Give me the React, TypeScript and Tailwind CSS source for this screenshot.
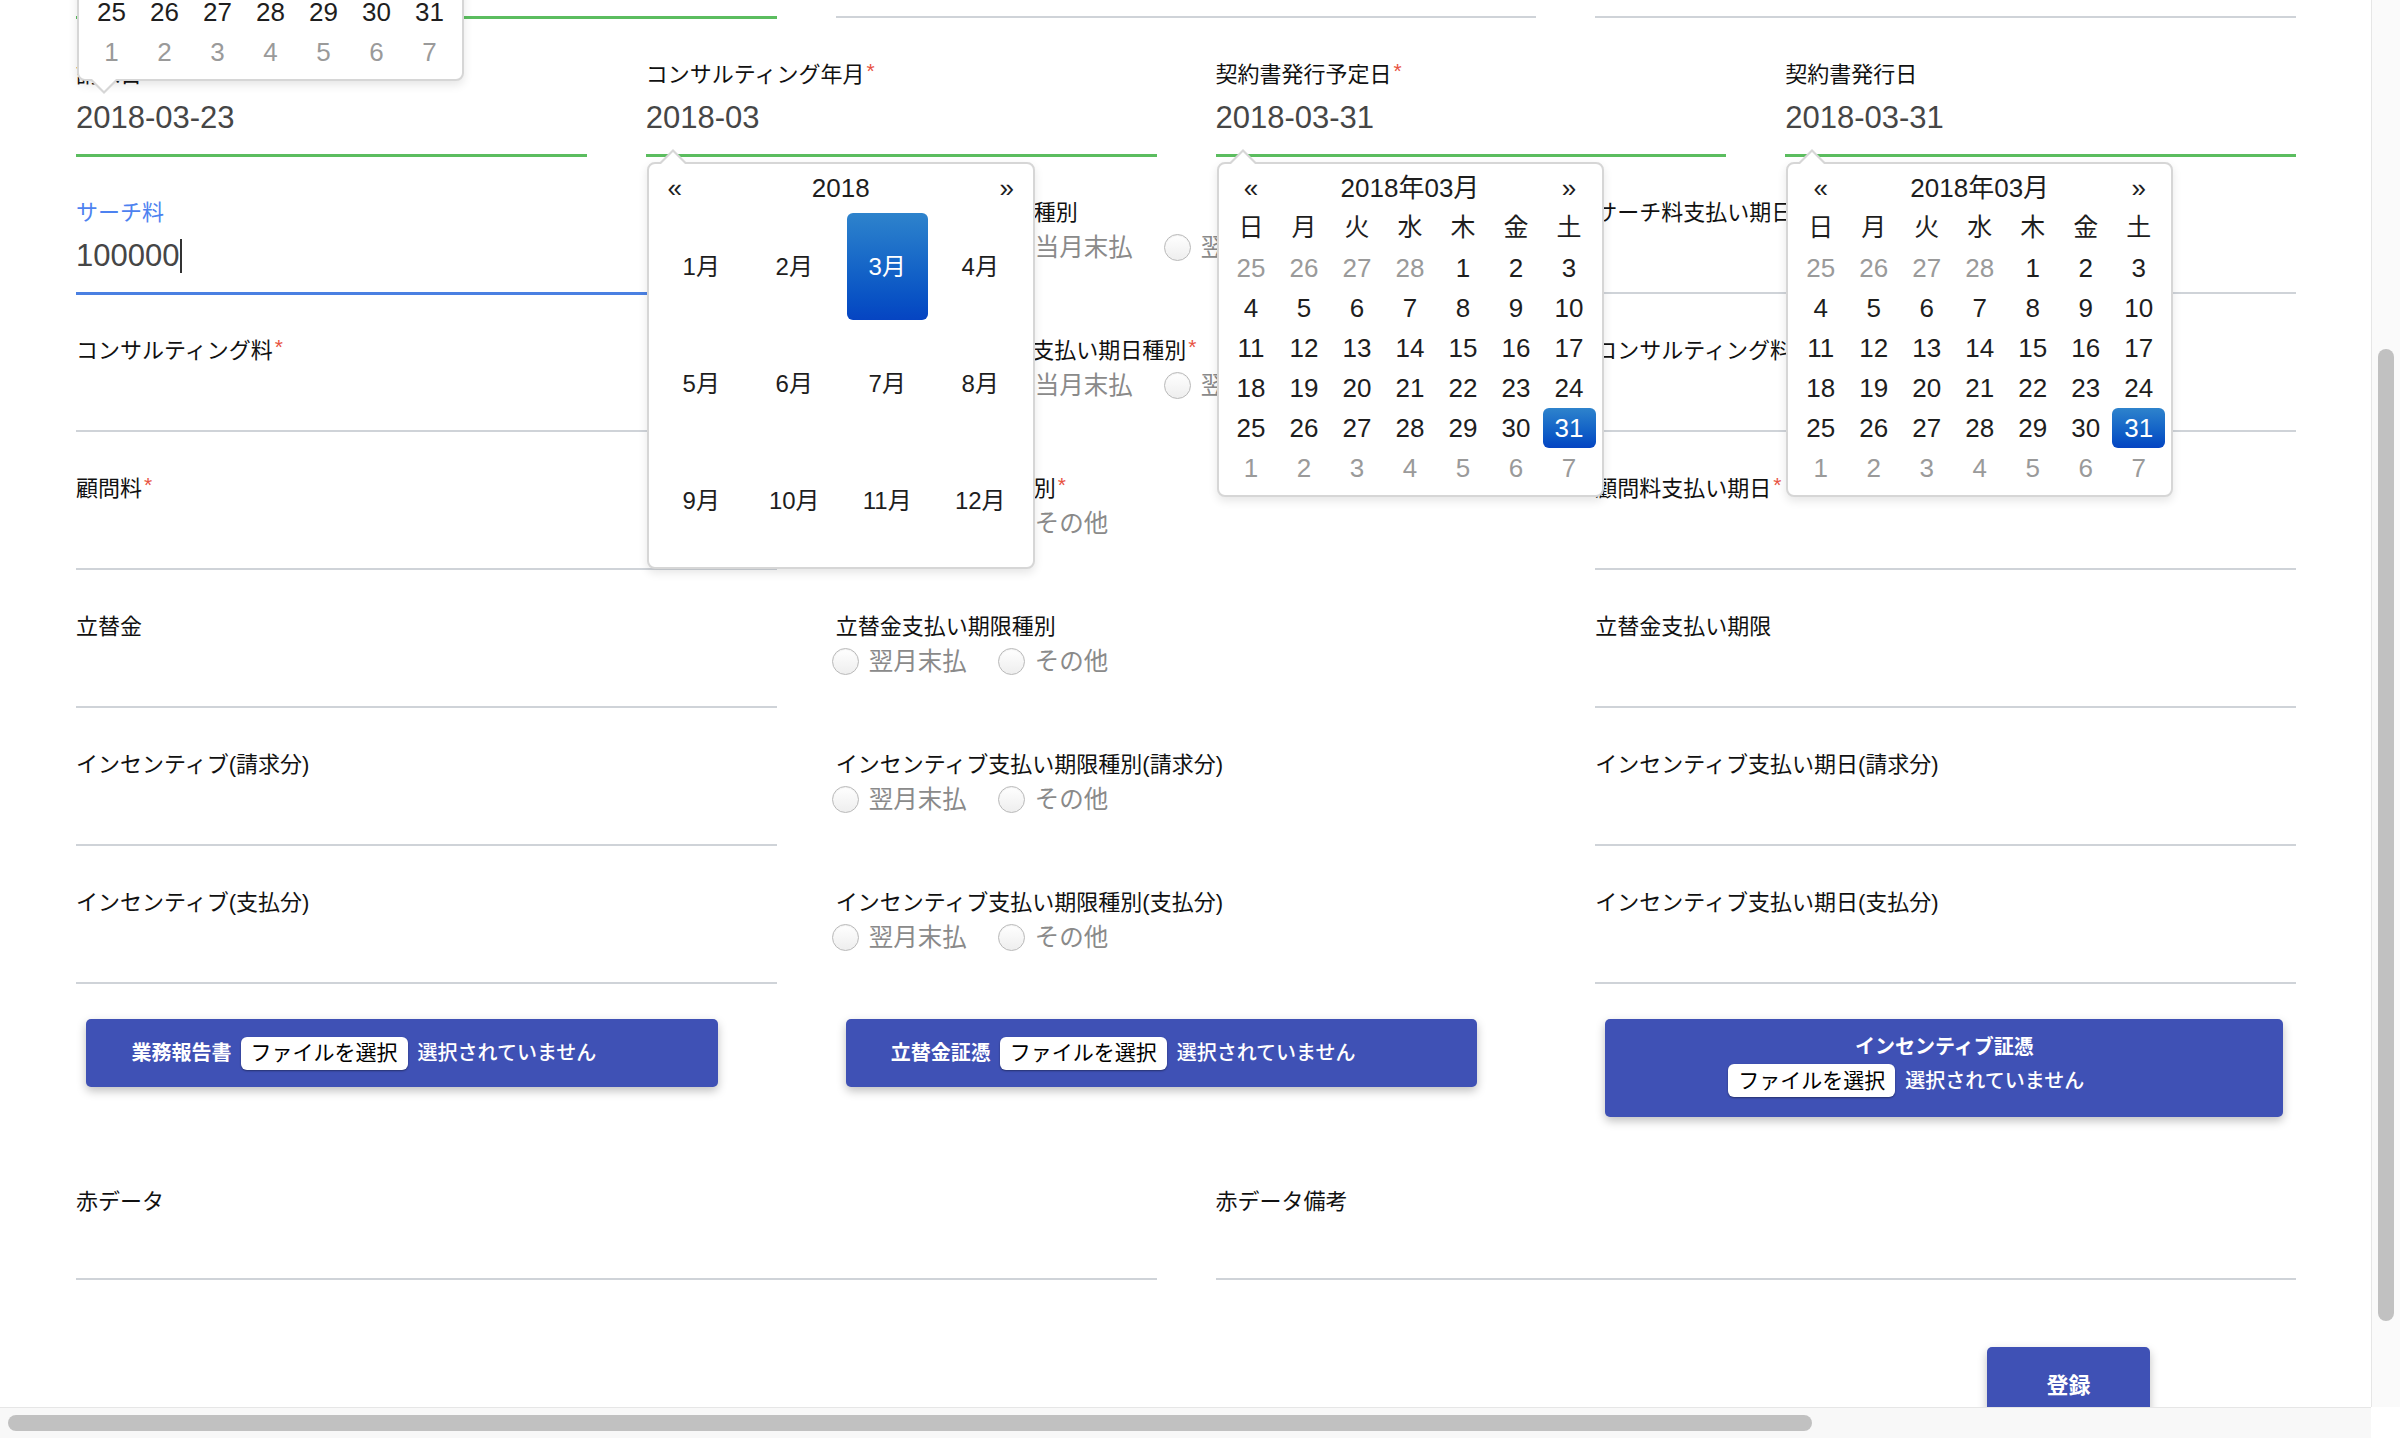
import React from "react";

type LineKind = "green" | "blue" | "gray";

function Line({ kind }: { kind: LineKind }) {
  if (kind === "green") return <div className="mt-[12px] h-[3px] bg-[#5bbd5f]" />;
  if (kind === "blue") return <div className="mt-[12px] h-[3px] bg-[#4a80e2]" />;
  return <div className="mt-[12px] h-[2px] bg-[#cfd3d8]" />;
}

function Req() {
  return <span className="relative top-[-4px] ml-[2px] text-[21px] leading-[0] text-[#e8533f]">*</span>;
}

function Label({ text, required, color }: { text: string; required?: boolean; color?: string }) {
  return (
    <div className={`h-[30px] whitespace-nowrap text-[22px] leading-[30px] ${color ?? "text-[#111111]"}`}>
      {text}
      {required && <Req />}
    </div>
  );
}

function Field({
  label,
  required,
  value,
  kind = "gray",
  labelColor,
  caret,
  valueH = "h-[48px]",
  children,
}: {
  label: string;
  required?: boolean;
  value?: string;
  kind?: LineKind;
  labelColor?: string;
  caret?: boolean;
  valueH?: string;
  children?: React.ReactNode;
}) {
  return (
    <div className="relative">
      <Label text={label} required={required} color={labelColor} />
      <div className={`mt-[4px] flex items-center text-[31px] text-[#464646] ${valueH}`}>
        {value}
        {caret && <span className="ml-[1px] inline-block h-[34px] w-[2px] bg-[#333333]" />}
      </div>
      <Line kind={kind} />
      {children}
    </div>
  );
}

function RadioField({ label, required, options }: { label: string; required?: boolean; options: string[] }) {
  return (
    <div>
      <Label text={label} required={required} />
      <div className="ml-[-4px] mt-[6px] flex h-[27px] items-center whitespace-nowrap">
        {options.map((o, i) => (
          <div key={o} className={`flex items-center ${i > 0 ? "ml-[31px]" : ""}`}>
            <span className="h-[27px] w-[27px] rounded-full border-[1.5px] border-[#b9b9b9] bg-linear-to-b from-white to-[#eeeeee] shadow-[inset_0_1px_1px_rgba(0,0,0,0.06)]" />
            <span className="ml-[10px] text-[24.5px] leading-[27px] text-[#8a8a8a]">{o}</span>
          </div>
        ))}
      </div>
    </div>
  );
}

function ArrowUp() {
  return (
    <>
      <span className="absolute left-[11px] top-[-15px] h-0 w-0 border-x-[13px] border-b-[13px] border-x-transparent border-b-[#d6d6d6]" />
      <span className="absolute left-[12px] top-[-12px] h-0 w-0 border-x-[12px] border-b-[12px] border-x-transparent border-b-white" />
    </>
  );
}

function ArrowDown() {
  return (
    <>
      <span className="absolute bottom-[-15px] left-[12px] h-0 w-0 border-x-[13px] border-t-[13px] border-x-transparent border-t-[#d6d6d6]" />
      <span className="absolute bottom-[-12px] left-[13px] h-0 w-0 border-x-[12px] border-t-[12px] border-x-transparent border-t-white" />
    </>
  );
}

const DAYS: { d: number; m: boolean }[] = [
  ...[25, 26, 27, 28].map((d) => ({ d, m: true })),
  ...Array.from({ length: 31 }, (_, i) => ({ d: i + 1, m: false })),
  ...[1, 2, 3, 4, 5, 6, 7].map((d) => ({ d, m: true })),
];

function DayPicker({ selected, pos, arrow }: { selected: number; pos: string; arrow: "up" | "down" }) {
  return (
    <div
      className={`absolute z-20 w-[387px] rounded-[8px] border-2 border-[#d6d6d6] bg-white px-[6px] pb-[7px] pt-[4px] text-[#1e1e1e] shadow-[0_4px_10px_rgba(0,0,0,0.10)] ${pos}`}
    >
      {arrow === "up" ? <ArrowUp /> : <ArrowDown />}
      <div className="flex h-[40px] items-center text-[26px]">
        <div className="w-[53px] text-center">«</div>
        <div className="flex-1 text-center">2018年03月</div>
        <div className="w-[53px] text-center">»</div>
      </div>
      <div className="grid h-[40px] grid-cols-7 items-center text-center text-[25px]">
        {["日", "月", "火", "水", "木", "金", "土"].map((w) => (
          <div key={w}>{w}</div>
        ))}
      </div>
      <div className="grid grid-cols-7 text-center text-[26px]">
        {DAYS.map((x, i) => {
          const sel = !x.m && x.d === selected;
          return (
            <div
              key={i}
              className={`flex h-[40px] items-center justify-center rounded-[6px] ${
                sel
                  ? "bg-linear-to-b from-[#2e83cc] to-[#0644c2] text-white"
                  : x.m
                  ? "text-[#9a9a9a]"
                  : "text-[#1e1e1e]"
              }`}
            >
              {x.d}
            </div>
          );
        })}
      </div>
    </div>
  );
}

function MonthPicker({ pos }: { pos: string }) {
  const months = Array.from({ length: 12 }, (_, i) => i + 1);
  return (
    <div
      className={`absolute z-20 w-[388px] rounded-[8px] border-2 border-[#d6d6d6] bg-white px-[6px] pb-[8px] pt-[4px] text-[#1e1e1e] shadow-[0_4px_10px_rgba(0,0,0,0.10)] ${pos}`}
    >
      <ArrowUp />
      <div className="flex h-[40px] items-center text-[26px]">
        <div className="w-[40px] text-center">«</div>
        <div className="flex-1 text-center">2018</div>
        <div className="w-[40px] text-center">»</div>
      </div>
      <div className="grid grid-cols-4">
        {months.map((m) => (
          <div key={m} className="flex h-[117px] items-stretch justify-stretch px-[6px] py-[5px]">
            <div
              className={`flex w-full items-center justify-center rounded-[6px] text-[24px] ${
                m === 3 ? "bg-linear-to-b from-[#2e83cc] to-[#0644c2] text-white" : "text-[#1e1e1e]"
              }`}
            >
              {m}月
            </div>
          </div>
        ))}
      </div>
    </div>
  );
}

function FileInput() {
  return (
    <div className="flex w-[432px] items-center">
      <div className="flex h-[33px] w-[167px] items-center justify-center rounded-[6px] bg-white text-[21px] text-black shadow-[0_1px_2px_rgba(0,0,0,0.4)]">
        ファイルを選択
      </div>
      <span className="ml-[10px] whitespace-nowrap text-[20px] font-medium text-white">選択されていません</span>
    </div>
  );
}

const row3 = "grid h-[97px] grid-cols-3 gap-x-[59px]";
const row4 = "grid h-[97px] grid-cols-4 gap-x-[59px]";

export default function App() {
  return (
    <div className="flex h-[1438px] w-[2400px] flex-col overflow-hidden bg-white font-['Liberation_Sans','Noto_Sans_CJK_JP',sans-serif]">
      <div className="flex min-h-0 flex-1">
        <div className="relative min-w-0 flex-1 overflow-hidden">
          <div className="ml-[76px] mt-[-78px] flex w-[2220px] flex-col">
            <div className="flex flex-col gap-y-[41px]">
              {/* row 1 (scrolled) */}
              <div className={row3}>
                <Field label="請求先" value="" kind="green" />
                <Field label="請求番号" />
                <Field label="担当者" />
              </div>
              {/* row 2 */}
              <div className={row4}>
                <Field label="請求日" value="2018-03-23" kind="green">
                  <DayPicker selected={23} arrow="down" pos="left-[1px] top-[-314px]" />
                </Field>
                <Field label="コンサルティング年月" required value="2018-03" kind="green">
                  <MonthPicker pos="left-[1px] top-[102px]" />
                </Field>
                <Field label="契約書発行予定日" required value="2018-03-31" kind="green">
                  <DayPicker selected={31} arrow="up" pos="left-[1px] top-[102px]" />
                </Field>
                <Field label="契約書発行日" value="2018-03-31" kind="green">
                  <DayPicker selected={31} arrow="up" pos="left-[1px] top-[102px]" />
                </Field>
              </div>
              {/* row 3 */}
              <div className={row3}>
                <Field label="サーチ料" value="100000" caret kind="blue" labelColor="text-[#4d82f0]" />
                <RadioField label="サーチ料支払い期日種別" options={["前月末払", "当月末払", "翌月末払", "その他"]} />
                <Field label="サーチ料支払い期日" />
              </div>
              {/* row 4 */}
              <div className={row3}>
                <Field label="コンサルティング料" required />
                <RadioField
                  label="コンサルティング料支払い期日種別"
                  required
                  options={["前月末払", "当月末払", "翌月末払", "その他"]}
                />
                <Field label="コンサルティング料支払い期日" required />
              </div>
              {/* row 5 */}
              <div className={row3}>
                <Field label="顧問料" required />
                <RadioField label="顧問料支払い期日種別" required options={["翌月末払", "その他"]} />
                <Field label="顧問料支払い期日" required />
              </div>
              {/* row 6 */}
              <div className={row3}>
                <Field label="立替金" />
                <RadioField label="立替金支払い期限種別" options={["翌月末払", "その他"]} />
                <Field label="立替金支払い期限" />
              </div>
              {/* row 7 */}
              <div className={row3}>
                <Field label="インセンティブ(請求分)" />
                <RadioField label="インセンティブ支払い期限種別(請求分)" options={["翌月末払", "その他"]} />
                <Field label="インセンティブ支払い期日(請求分)" />
              </div>
              {/* row 8 */}
              <div className={row3}>
                <Field label="インセンティブ(支払分)" />
                <RadioField label="インセンティブ支払い期限種別(支払分)" options={["翌月末払", "その他"]} />
                <Field label="インセンティブ支払い期日(支払分)" />
              </div>
            </div>

            {/* file buttons */}
            <div className="mt-[34px] grid grid-cols-3 items-start gap-x-[59px]">
              <div className="pl-[10px]">
                <div className="flex h-[68px] w-[632px] items-center justify-center rounded-[5px] bg-[#3f51b5] shadow-[0_4px_10px_rgba(0,0,0,0.25)]">
                  <span className="mr-[9px] whitespace-nowrap text-[20px] font-bold text-white">業務報告書</span>
                  <FileInput />
                </div>
              </div>
              <div className="pl-[10px]">
                <div className="flex h-[68px] w-[631px] items-center justify-center rounded-[5px] bg-[#3f51b5] shadow-[0_4px_10px_rgba(0,0,0,0.25)]">
                  <span className="mr-[9px] whitespace-nowrap text-[20px] font-bold text-white">立替金証憑</span>
                  <FileInput />
                </div>
              </div>
              <div className="pl-[10px]">
                <div className="flex h-[98px] w-[678px] flex-col items-center rounded-[5px] bg-[#3f51b5] pt-[13px] shadow-[0_4px_10px_rgba(0,0,0,0.25)]">
                  <div className="h-[30px] whitespace-nowrap text-[20px] font-bold leading-[30px] text-white">
                    インセンティブ証憑
                  </div>
                  <div className="mt-[2px]">
                    <FileInput />
                  </div>
                </div>
              </div>
            </div>

            {/* red data */}
            <div className="mt-[70px] grid grid-cols-2 gap-x-[59px]">
              <Field label="赤データ" valueH="h-[45px]" />
              <Field label="赤データ備考" valueH="h-[45px]" />
            </div>

            {/* submit */}
            <div className="mt-[67px] flex justify-end pr-[146px]">
              <div className="flex h-[76px] w-[163px] items-center justify-center rounded-[5px] bg-[#3f51b5] text-[22px] font-bold text-white shadow-[0_4px_10px_rgba(0,0,0,0.25)]">
                登録
              </div>
            </div>
          </div>
        </div>
        {/* vertical scrollbar */}
        <div className="w-[29px] shrink-0 border-l border-[#e6e6e6] bg-[#fafafa] pl-[6px] pt-[349px]">
          <div className="h-[972px] w-[16px] rounded-full bg-[#c1c1c1]" />
        </div>
      </div>
      {/* horizontal scrollbar */}
      <div className="flex h-[31px] shrink-0">
        <div className="flex-1 border-t border-[#e6e6e6] bg-[#f8f8f8] pl-[8px] pt-[7px]">
          <div className="h-[16px] w-[1804px] rounded-full bg-[#c1c1c1]" />
        </div>
        <div className="w-[29px] bg-white" />
      </div>
    </div>
  );
}
